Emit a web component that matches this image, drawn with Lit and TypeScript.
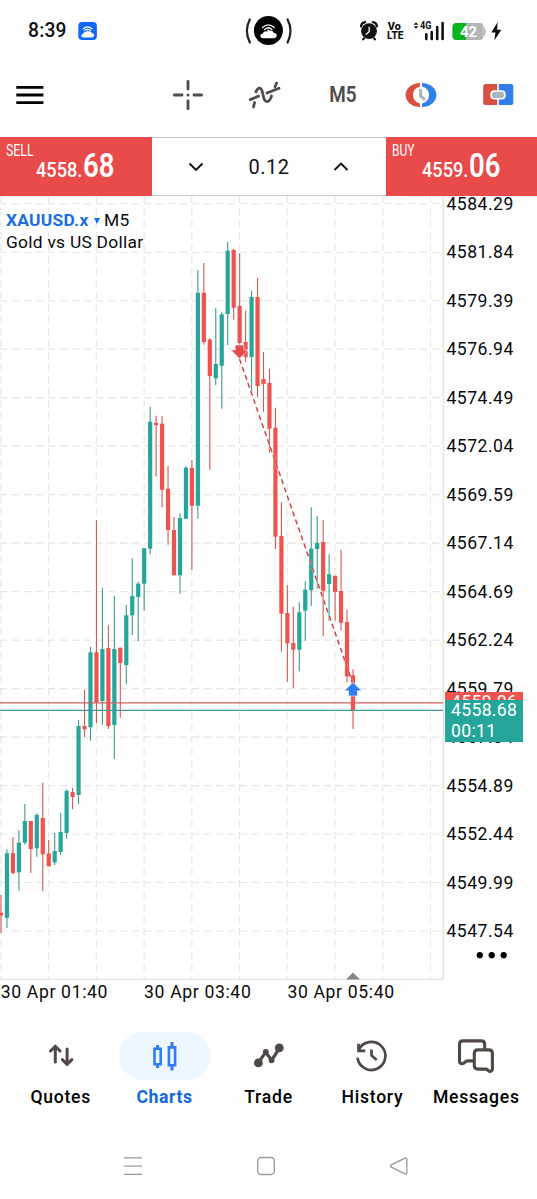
import { LitElement, html, svg, css } from "lit";
import { customElement, state } from "lit/decorators.js";

// [direction, high, body top, body bottom, low] in plot pixels
type Candle = [string, number, number, number, number];
const CANDLES: Candle[] = [
  ["d", 895, 912.7, 915.7, 933], ["u", 849.3, 853.3, 917.7, 928], ["d", 837.3, 853, 873, 874.3],
  ["u", 830, 842.7, 872.3, 890.7], ["u", 804, 821, 842.7, 844.7], ["d", 821, 821, 849, 873],
  ["u", 813.3, 815, 848.3, 856.7], ["d", 782.7, 818, 854.3, 891], ["d", 840, 853.3, 866.3, 866.6],
  ["u", 833, 851, 862.3, 865], ["u", 812.7, 832, 852, 855], ["u", 789.3, 791, 833, 838.7],
  ["d", 787.7, 792, 797, 809.3], ["u", 720, 726, 795, 804], ["d", 690, 726, 729.3, 737],
  ["u", 646.7, 652.3, 727.3, 740.7], ["d", 520.3, 652.3, 702, 723.3], ["u", 587.7, 649, 701, 724.7],
  ["d", 625.3, 648, 726, 729], ["u", 596, 649, 725, 759], ["d", 647.7, 647.7, 663, 717.7],
  ["u", 605, 615.3, 665, 684.3], ["u", 558.3, 596, 615.3, 635], ["u", 581.7, 583.7, 597, 641],
  ["u", 548.3, 548.3, 583.7, 611], ["u", 406.7, 421.7, 548.7, 554], ["d", 415.7, 422.8, 425.2, 476.7],
  ["d", 416, 423.7, 489.7, 507.3], ["d", 466, 488.7, 530, 544.7], ["d", 517, 530, 575.3, 575.6],
  ["u", 513.3, 518, 575.3, 593.7], ["u", 466.3, 467.7, 518.7, 519], ["d", 460, 468, 505.7, 569.7],
  ["u", 270, 292.7, 505.7, 518.7], ["d", 263, 292.7, 342, 344.7], ["d", 338, 339.7, 376, 469.7],
  ["u", 308.3, 364, 378.3, 385], ["u", 312, 314.3, 365.7, 408.7], ["u", 242, 250.7, 314, 345],
  ["d", 249, 250, 307.7, 319.7], ["d", 253.3, 306, 343, 352], ["d", 311, 342, 357, 362],
  ["u", 290.7, 297, 357, 391.7], ["d", 277.7, 297, 386, 397], ["d", 352, 379, 384, 411.7],
  ["d", 369, 383, 428.7, 452.7], ["d", 407.7, 427.7, 536.7, 549], ["d", 502, 536, 613.7, 651.7],
  ["d", 585.3, 613, 643.3, 681.7], ["d", 606.7, 643, 649.7, 688], ["u", 602.3, 612.3, 649.7, 671.3],
  ["u", 581.3, 589.7, 610.7, 640.7], ["u", 507.3, 548.7, 590.3, 606], ["u", 516.3, 543, 549, 588.7],
  ["d", 520, 542, 590.7, 636.3], ["u", 554.3, 574.3, 584, 621], ["d", 575.7, 575.7, 592, 620.7],
  ["d", 549.7, 591, 622.7, 630.3], ["d", 609.7, 622, 676.3, 682.3], ["d", 669.3, 675.3, 711, 729],
];

const PRICES = ["4584.29", "4581.84", "4579.39", "4576.94", "4574.49", "4572.04", "4569.59", "4567.14",
  "4564.69", "4562.24", "4559.79", "4557.34", "4554.89", "4552.44", "4549.99", "4547.54"];

@customElement("status-bar")
class StatusBar extends LitElement {
  static styles = css`
    :host { display: grid; height: 60px; padding-left: 28px; box-sizing: border-box;
      grid-template-columns: 50px 167px 112px 30px 25px 39px 39px 1fr; align-items: start; }
    svg { display: block; }
    .time { font: 500 19.3px/24px Roboto, sans-serif; letter-spacing: 0.2px; color: #111; padding-top: 19px; }
    text { font-family: Roboto, sans-serif; }
  `;
  render() {
    const cloud = svg`<path d="M4 17.6C0.8 17.6 0.8 13.4 4 13.2C4.3 10.9 7 10.4 8.3 11.6C10 9.6 13.6 10 14.2 12.8C17.6 12.6 17.8 17.4 14.5 17.6Z" fill="#fff"/>
      <path d="M3.6 7.6Q9 2.6 14.4 7.6M5.6 9.4Q9 6.2 12.4 9.4" fill="none" stroke="#fff" stroke-width="1.3" stroke-linecap="round"/><circle cx="9" cy="10.6" r="1.2" fill="#fff"/>`;
    return html`
      <span class="time">8:39</span>
      <svg width="20" height="60" viewBox="78 0 20 60"><rect x="78.3" y="22" width="18.6" height="18" rx="4" fill="#0d68f5"/>
        <g transform="translate(80 22.6) scale(.84)">${cloud}</g></svg>
      <svg width="48" height="60" viewBox="245 0 48 60"><circle cx="268.4" cy="30.5" r="14.5" fill="#000"/>
        <g transform="translate(258.7 19.4) scale(1.07)">${cloud}</g>
        <path d="M249.8 19.5Q244 30.5 249.8 42.5M287.6 19.5Q293.4 30.5 287.6 42.5" fill="none" stroke="#222" stroke-width="2.2" stroke-linecap="round"/></svg>
      <svg width="28" height="60" viewBox="357 0 28 60"><circle cx="369" cy="31.2" r="7.9" fill="#111"/>
        <path d="M361 26.3Q361.5 22.7 365.2 22.2M377 26.3Q376.5 22.7 372.8 22.2M363.9 38.4L363.1 39.4M374.1 38.4L374.9 39.4" stroke="#111" stroke-width="2.2" fill="none" stroke-linecap="round"/>
        <path d="M369.2 26.8V31.8L365.8 34.5" stroke="#fff" stroke-width="1.3" fill="none"/></svg>
      <svg width="22" height="60" viewBox="387 0 22 60"><text x="387.8" y="29.6" font-size="10.5" font-weight="900" fill="#111" textLength="13" lengthAdjust="spacingAndGlyphs">Vo</text>
        <text x="387" y="39.4" font-size="11.5" font-weight="800" fill="#111" textLength="16.5" lengthAdjust="spacingAndGlyphs">LTE</text></svg>
      <svg width="36" height="60" viewBox="412 0 36 60"><path d="M413.6 24.8L416 22.2L418.4 24.8ZM413.6 26.2L416 28.8L418.4 26.2Z" fill="#111"/>
        <text x="420" y="29.3" font-size="10.5" font-weight="700" fill="#111" textLength="11.5" lengthAdjust="spacingAndGlyphs">4G</text>
        <path d="M426.3 34.2V39M431.7 32V39M437.2 27V39M442.6 23V39" stroke="#111" stroke-width="2.6" stroke-linecap="round"/></svg>
      <svg width="37" height="60" viewBox="451 0 37 60"><rect x="452.5" y="23" width="31" height="17" rx="4" fill="#b5b5b5"/><path d="M484.2 27.5Q486.6 31.5 484.2 35.5Z" fill="#b5b5b5" stroke="#b5b5b5"/>
        <path d="M466 23H456.5Q452.5 23 452.5 27V36Q452.5 40 456.5 40H466Z" fill="#06b51a"/>
        <text x="460" y="37" font-size="15" font-weight="700" fill="#fff" textLength="17" lengthAdjust="spacingAndGlyphs">42</text></svg>
      <svg width="16" height="60" viewBox="490 0 16 60"><path d="M497.7 22L491.3 32.6H495.4L494.3 40.6L501.4 29.8H497.1Z" fill="#111"/></svg>`;
  }
}

@customElement("tool-bar")
class ToolBar extends LitElement {
  static styles = css`
    :host { display: grid; height: 77px; padding-left: 14px; box-sizing: border-box;
      grid-template-columns: 158px 76px 80px 76px 76px 1fr; align-items: start; }
    svg { display: block; }
    text { font-family: Roboto, sans-serif; }
  `;
  render() {
    return html`
      <svg width="34" height="70" viewBox="14 60 34 70"><path d="M16.3 87.4H43.4M16.3 95H43.4M16.3 102.6H43.4" stroke="#000" stroke-width="2.8"/></svg>
      <svg width="34" height="70" viewBox="172 60 34 70"><path d="M188 81.3V89M188 100.9V108.7M174.4 95H182M194 95H201.6" stroke="#514b49" stroke-width="2.8" stroke-linecap="round"/><circle cx="188" cy="95" r="1.5" fill="#514b49"/></svg>
      <svg width="36" height="70" viewBox="248 60 36 70" fill="none" stroke="#514b49" stroke-width="2.8" stroke-linecap="round">
        <path d="M253.5 106.8L254.6 102.5M256 91.8C257.3 88.6 258.7 88 260 88.2C263.9 89 262 101.8 267.2 101.6C269.8 101.5 270.6 98.7 271.5 96M275 86.7L276.6 83"/><path d="M250.4 99.6L258.6 96.1M267 93L279 88.2"/></svg>
      <svg width="34" height="70" viewBox="328 60 34 70"><text x="329.3" y="102.4" font-size="21.8" font-weight="600" fill="#514b49" textLength="27.3" lengthAdjust="spacingAndGlyphs">M5</text></svg>
      <svg width="36" height="70" viewBox="404 60 36 70"><path d="M420 83A14.4 12 0 0 0 420 107V103.5A10 8.9 0 0 1 420 86.5Z" fill="#d94f43"/><path d="M422 83A14.4 12 0 0 1 422 107V103.5A10 8.9 0 0 0 422 86.5Z" fill="#2f80ed"/>
        <path d="M420.6 89V96L425 99.8" fill="none" stroke="#abb7bf" stroke-width="3"/></svg>
      <svg width="36" height="70" viewBox="480 60 36 70"><path d="M497.2 84H485.7Q483.2 84 483.2 86.5V102.6Q483.2 105.1 485.7 105.1H497.2Z" fill="#d94f43"/><path d="M498.8 84H510.8Q513.3 84 513.3 86.5V102.6Q513.3 105.1 510.8 105.1H498.8Z" fill="#2f80ed"/>
        <rect x="490.3" y="90.2" width="15.4" height="9.4" rx="4" fill="#fff"/><rect x="492" y="91.8" width="12" height="6.2" rx="2.8" fill="#abb7bf"/></svg>`;
  }
}

@customElement("trade-panel")
class TradePanel extends LitElement {
  static styles = css`
    :host { display: grid; height: 59px; grid-template-columns: 152px 233.5px 1fr; }
    svg { display: block; }
    .side { background: #e94b4b; }
    .side text { font-family: Roboto, sans-serif; fill: #fff; }
    .volume { display: grid; grid-template-columns: 88px 58px 86px; align-items: center; justify-items: center;
      box-sizing: border-box; border-top: 1px solid #c9c9c9; border-bottom: 1px solid #c9c9c9; }
    .amount { font: 20px/24px Roboto, sans-serif; letter-spacing: 0.45px; color: #111; }
  `;
  side(label: string, labelWidth: number, main: string, pips: string, left: number) {
    return html`<div class="side"><svg width="151" height="59" viewBox="0 0 151 59">
      <text x="6" y="19" font-size="15.8" textLength=${labelWidth} lengthAdjust="spacingAndGlyphs">${label}</text>
      <text x=${left} y="39.5" font-size="20.8" font-weight="500" textLength="46.3" lengthAdjust="spacingAndGlyphs">${main}</text>
      <text x=${left + 47} y="39.5" font-size="32.3" font-weight="600" textLength="31.5" lengthAdjust="spacingAndGlyphs">${pips}</text>
    </svg></div>`;
  }
  render() {
    return html`${this.side("SELL", 27.5, "4558.", "68", 36)}
      <div class="volume">
        <svg width="16" height="12" viewBox="0 0 16 12"><path d="M1.5 2.5L8 9L14.5 2.5" fill="none" stroke="#111" stroke-width="1.9"/></svg>
        <span class="amount">0.12</span>
        <svg width="16" height="12" viewBox="0 0 16 12"><path d="M1.5 9L8 2.5L14.5 9" fill="none" stroke="#111" stroke-width="1.9"/></svg>
      </div>
      ${this.side("BUY", 22.5, "4559.", "06", 36)}`;
  }
}

@customElement("price-chart")
class PriceChart extends LitElement {
  static styles = css`
    :host { display: grid; position: relative; height: 814px; grid-template-columns: 445px 1fr; grid-template-rows: 784px 30px;
      overflow: hidden; font-family: Roboto, sans-serif; color: #0b0b0b; }
    .plot { display: block; }
    .prices { display: flex; flex-direction: column; padding: 0 0 0 1.5px; margin-top: -16.1px; }
    .price { flex: none; height: 48.49px; line-height: 48.49px; font-size: 17.6px; letter-spacing: 0.48px; }
    .times { grid-column: 1 / 3; display: grid; grid-template-columns: 143.3px 143.3px 1fr; padding-left: 0.8px;
      font-size: 17.6px; line-height: 24px; letter-spacing: 0.64px; white-space: nowrap; }
    .title { position: absolute; left: 6px; top: 13px; font-size: 17.4px; line-height: 22px; letter-spacing: 0.26px; }
    .symbol { color: #1a6fdf; font-weight: 700; }
    .arrow { display: inline-block; vertical-align: 2px; margin: 0 4.5px 0 5px; }
    .tag { position: absolute; left: 445px; width: 78px; box-sizing: border-box; padding-left: 6px; color: #fff;
      font-size: 17.6px; line-height: 21px; letter-spacing: 0.33px; }
    .ask { top: 496px; height: 21px; background: #ef5350; }
    .bid { top: 504px; height: 41.5px; background: #26a69a; }
    .more { position: absolute; left: 476px; top: 755px; }
  `;
  render() {
    return html`
      <svg class="plot" width="445" height="784" viewBox="0 196 445 784">
        <g stroke="#e5e5e5" stroke-width="1.1">
          ${PRICES.map((_, i) => svg`<path d="M0 ${203.7 + i * 48.49}H443" stroke-dasharray="7 5"/>`)}
          ${Array.from({ length: 10 }, (_, i) => svg`<path d="M${0.9 + i * 47.73} 196V979" stroke-dasharray="7 5"/>`)}
        </g>
        <path d="M443.2 196V979.3H0" fill="none" stroke="#dcdcdc" stroke-width="1.1"/>
        ${CANDLES.map(([dir, high, top, bottom, low], i) => {
          const x = 1 + i * 5.966;
          const up = dir === "u";
          return svg`<path d="M${x} ${high}V${low}" stroke=${up ? "#3f9a8f" : "#cf5a57"} stroke-width="1.1"/>
            <rect x=${x - 2.1} y=${top} width="4.2" height=${bottom - top} fill=${up ? "#26a69a" : "#ef5350"}/>`;
        })}
        <path d="M0 702.9H443" stroke="#d0605c" stroke-width="1.2"/>
        <path d="M0 710.3H443" stroke="#419a92" stroke-width="1.2"/>
        <path d="M239.5 359L353 684" stroke="#fff" stroke-opacity=".6" stroke-width="2.4" stroke-dasharray="5 3.5"/>
        <path d="M239.5 359L353 684" stroke="#d04347" stroke-width="1.5" stroke-dasharray="5 3.5"/>
        <path d="M235.2 345H243.8V350H248L239.5 358.8L231 350H235.2Z" fill="#e84a4a" stroke="#fff" stroke-width=".6"/>
        <path d="M348.6 696V690.8H344.2L353 682.5L361.8 690.8H357.4V696Z" fill="#2f7df0" stroke="#fff" stroke-width=".6"/>
        <path d="M346 979.5L353 972.5L360 979.5Z" fill="#858585"/>
      </svg>
      <div class="prices">${PRICES.map((p) => html`<span class="price">${p}</span>`)}</div>
      <div class="times"><span>30 Apr 01:40</span><span>30 Apr 03:40</span><span>30 Apr 05:40</span></div>
      <div class="title"><span class="symbol">XAUUSD.x</span><svg class="arrow" width="6" height="6" viewBox="0 0 6 6"><path d="M0 0H6L3 6Z" fill="#1a6fdf"/></svg>M5<br>Gold vs US Dollar</div>
      <div class="tag ask">4559.06</div>
      <div class="tag bid">4558.68<br>00:11</div>
      <svg class="more" width="32" height="8" viewBox="0 0 32 8"><circle cx="3.8" cy="4.2" r="3.1"/><circle cx="15.7" cy="4.2" r="3.1"/><circle cx="27.7" cy="4.2" r="3.1"/></svg>`;
  }
}

@customElement("bottom-nav")
class BottomNav extends LitElement {
  @state() active = "Charts";
  static styles = css`
    :host { display: grid; grid-template-columns: repeat(5, 103.9px); padding: 22px 0 0 8.8px; height: 110px; box-sizing: border-box; }
    .item { display: flex; flex-direction: column; align-items: center; gap: 5px; font: 500 17.6px/24px Roboto, sans-serif;
      letter-spacing: 0.75px; color: #000; white-space: nowrap; }
    .pill { display: grid; place-items: center; width: 92px; height: 48px; border-radius: 24px; }
    .active { color: #1268e0; font-weight: 700; letter-spacing: 0.6px; }
    .active .pill { background: #eff7fe; }
    svg { display: block; fill: none; stroke: #514846; }
  `;
  render() {
    const items = [
      ["Quotes", svg`<path d="M14.3 24.1V8.8M9.5 13L14.3 8.2L19.1 13M26.1 11V26M21.3 21.6L26.1 26.4L30.9 21.6" stroke-width="3" stroke-linecap="round" stroke-linejoin="round"/>`],
      ["Charts", svg`<g stroke="#2f7df0"><path d="M12.6 7V10M12.6 27V30M27 4V8M27 28V32.5" stroke-width="3"/><path d="M9.5 10.8H15.7V26.2H9.5ZM23.9 9.4H30.1V27.2H23.9Z" stroke-width="2.6"/></g>`],
      ["Trade", svg`<path d="M9.4 24.6L16.7 14.2L22.7 22.2L30.4 10.1" stroke-width="3.2"/><g fill="#514846" stroke="none"><circle cx="9.4" cy="24.9" r="4.4"/><circle cx="16.8" cy="14" r="2.9"/><circle cx="22.6" cy="22.3" r="2.9"/><circle cx="30.3" cy="9.9" r="4.4"/></g>`],
      ["History", svg`<g transform="translate(-.5 -1.2)"><path d="M7.2 13.2A14 14 0 1 1 6 21M7 7V14H13.8M20 12.8V18.6L25.2 23.2" stroke-width="2.7"/></g>`],
      ["Messages", svg`<g transform="translate(-.7 -.7)"><path d="M17.5 23.6H12.5Q10.5 23.6 9.5 25C8 27 4.2 27 4.2 24V7Q4.2 3.6 7.6 3.6H26Q29.4 3.6 29.4 7V11M23.5 12.6H33.5Q37.1 12.6 37.1 16.2V31C37.1 34.5 34 34.8 32.8 33Q32 31.8 30.5 31.8H22.6Q19 31.8 19 28.2V16.2Q19 12.6 22.6 12.6Z" stroke-width="3.1" stroke-linejoin="round"/></g>`],
    ] as const;
    return html`${items.map(([name, icon]) => html`<div class="item ${name === this.active ? "active" : ""}">
      <div class="pill"><svg width="40" height="36" viewBox="0 0 40 36">${icon}</svg></div><span>${name}</span></div>`)}`;
  }
}

@customElement("system-nav")
class SystemNav extends LitElement {
  static styles = css`
    :host { display: grid; height: 79px; padding-left: 67px; grid-template-columns: repeat(3, 132.7px); justify-items: center; padding-top: 34px; box-sizing: border-box; }
    svg { display: block; fill: none; stroke: #999; stroke-width: 1.3; }
  `;
  render() {
    return html`
      <svg width="20" height="24" viewBox="0 0 20 24"><path d="M1 3.8H19M1 12.2H19M1 20.4H19"/></svg>
      <svg width="20" height="24" viewBox="0 0 20 24"><rect x="1.7" y="3.5" width="16.6" height="17" rx="3.6"/></svg>
      <svg width="20" height="24" viewBox="0 0 20 24"><path d="M17.8 5.2V18.8Q17.6 20.4 16 19.8L2.3 13.2Q.8 12 2.3 10.8L16 4.2Q17.6 3.6 17.8 5.2Z"/></svg>`;
  }
}

@customElement("app-root")
class AppRoot extends LitElement {
  static styles = css`
    :host { display: block; width: 537px; height: 1199px; background: #fefefe; overflow: hidden; }
  `;
  render() {
    return html`<status-bar></status-bar><tool-bar></tool-bar><trade-panel></trade-panel>
      <price-chart></price-chart><bottom-nav></bottom-nav><system-nav></system-nav>`;
  }
}
